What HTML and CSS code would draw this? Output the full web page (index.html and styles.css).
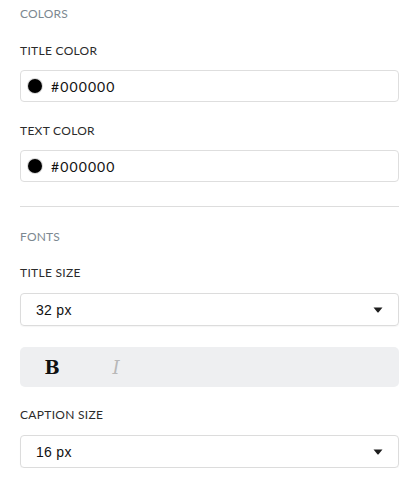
FILE: index.html
```html
<!DOCTYPE html>
<html>
<head>
<meta charset="utf-8">
<link rel="stylesheet" href="styles.css">
</head>
<body>
<div class="panel">
  <div class="section-title first">COLORS</div>
  <div class="label">TITLE COLOR</div>
  <div class="color-input">
    <span class="swatch"></span>
    <span class="color-value">#000000</span>
  </div>
  <div class="label">TEXT COLOR</div>
  <div class="color-input">
    <span class="swatch"></span>
    <span class="color-value">#000000</span>
  </div>
  <div class="divider"></div>
  <div class="section-title">FONTS</div>
  <div class="label label-select">TITLE SIZE</div>
  <div class="select">
    <span class="select-value">32 px</span>
    <svg class="caret" width="10" height="6" viewBox="0 0 10 6"><path d="M0.5 0.5 H9.5 L5.6 5.3 Q5 5.9 4.4 5.3 Z" fill="#1e1e1e"/></svg>
  </div>
  <div class="toolbar">
    <span class="tool tool-bold">B</span>
    <span class="tool tool-italic">I</span>
  </div>
  <div class="label label-select">CAPTION SIZE</div>
  <div class="select">
    <span class="select-value">16 px</span>
    <svg class="caret" width="10" height="6" viewBox="0 0 10 6"><path d="M0.5 0.5 H9.5 L5.6 5.3 Q5 5.9 4.4 5.3 Z" fill="#1e1e1e"/></svg>
  </div>
</div>
</body>
</html>
```
FILE: styles.css
```css
html, body {
  margin: 0;
  padding: 0;
  background: #ffffff;
}
.panel {
  padding: 0 20px;
  font-family: Lato, "Open Sans", sans-serif;
}
.section-title {
  font-size: 12px;
  line-height: 16px;
  color: #7c8891;
  margin-top: 22px;
  letter-spacing: 0.2px;
}
.section-title.first {
  margin-top: 6px;
}
.label {
  font-size: 12px;
  line-height: 16px;
  color: #2b2b2b;
  letter-spacing: 0.3px;
  margin-top: 21px;
  margin-bottom: 11px;
}
.label-select {
  margin-top: 20px;
  margin-bottom: 12px;
}
.color-input {
  display: flex;
  align-items: center;
  height: 32px;
  box-sizing: border-box;
  border: 1px solid #dedede;
  border-radius: 4px;
  padding-left: 7px;
}
.swatch {
  width: 14px;
  height: 14px;
  border-radius: 50%;
  background: #000;
  box-shadow: 0 0 0 1px #d8d8d8;
  flex: none;
}
.color-value {
  margin-left: 9px;
  font-size: 14px;
  letter-spacing: 1.1px;
  color: #111;
}
.divider {
  height: 1px;
  background: #dddddd;
  margin-top: 24px;
}
.select {
  display: flex;
  align-items: center;
  justify-content: space-between;
  height: 33px;
  box-sizing: border-box;
  border: 1px solid #dcdcdc;
  border-radius: 4px;
  padding: 0 15px 0 15px;
  box-shadow: 0 1px 1px rgba(0,0,0,0.04);
}
.select-value {
  font-family: "Liberation Sans", Arial, sans-serif;
  font-size: 14px;
  letter-spacing: 0.3px;
  color: #111;
}
.caret {
  display: block;
}
.toolbar {
  display: flex;
  height: 40px;
  margin-top: 21px;
  background: #eeeff1;
  border-radius: 5px;
}
.tool {
  width: 64px;
  display: flex;
  align-items: center;
  justify-content: center;
  font-family: "DejaVu Serif", "Liberation Serif", serif;
  font-size: 18px;
}
.tool-bold {
  font-weight: bold;
  color: #111;
}
.tool-italic {
  font-style: italic;
  font-weight: normal;
  color: #b8b8b8;
}
```
